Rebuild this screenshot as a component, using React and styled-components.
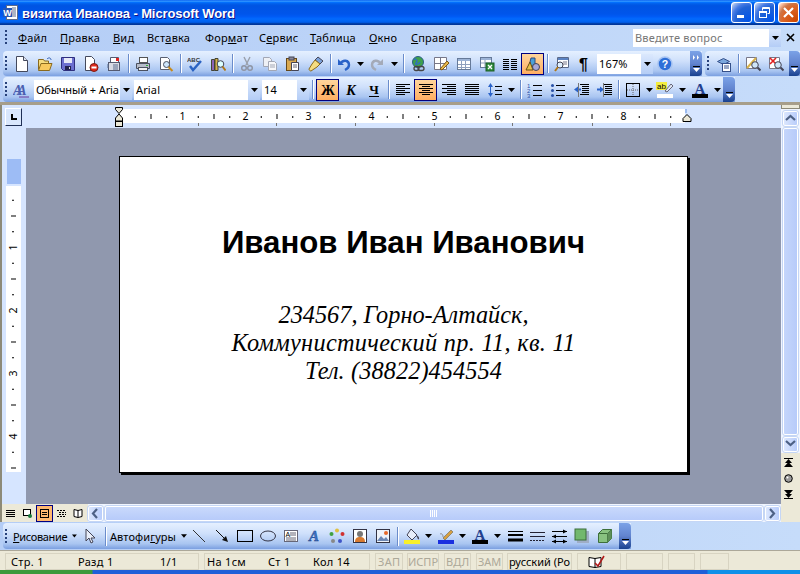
import React from 'react';
import styled, { createGlobalStyle } from 'styled-components';

const Global = createGlobalStyle`
  html, body { margin: 0; padding: 0; background: #c3daf9; overflow: hidden; }
  * { box-sizing: border-box; }
`;

const UI = `"Noto Sans", "DejaVu Sans", sans-serif`;

const Win = styled.div`
  width: 800px; height: 574px; display: flex; flex-direction: column; overflow: hidden;
  font-family: ${UI}; font-size: 11px; color: #000; background: #c3daf9;
`;
const TitleBar = styled.div`
  height: 25px; flex: none; display: flex; align-items: center; padding: 0 1px 0 3px;
  background: linear-gradient(#0058ee 0%, #3593ff 4%, #288eff 6%, #127dff 8%, #036ffc 10%, #0262ee 14%, #0057e5 20%, #0054e3 24%, #0055eb 56%, #005bf5 66%, #026afe 76%, #0062ef 86%, #0052d6 92%, #0040ab 94%, #003092 100%);
`;
const TitleText = styled.div`
  flex: 1; margin-left: 3px; padding-top: 2px; color: #fff; font: bold 13px "Liberation Sans", sans-serif;
  letter-spacing: -0.1px; text-shadow: 1px 1px #0f1089; white-space: nowrap;
`;
const WinBtn = styled.div`
  width: 21px; height: 21px; margin-left: ${p => p.$ml || 0}px; border: 1px solid #fff; border-radius: 3px;
  display: flex; align-items: center; justify-content: center;
  background: ${p => p.$close
    ? 'radial-gradient(circle at 90% 90%, #cc4600 0%, #dc6527 55%, #cd7546 70%, #ffccb2 90%, #fff 100%)'
    : 'radial-gradient(circle at 90% 90%, #0054e9 0%, #2263d5 55%, #4479e4 70%, #a3bbec 90%, #fff 100%)'};
`;
const Dock = styled.div`
  flex: none; display: flex; flex-direction: column;
  background: linear-gradient(90deg, #b4cdf6, #c6dcfa);
`;
const MenuBar = styled.div`
  height: 26px; display: flex; align-items: center; padding-left: 5px; padding-bottom: 1px;
`;
const Grip = styled.div`
  width: 5px; height: ${p => p.$h || 15}px; margin-right: ${p => p.$mr ?? 2}px; flex: none;
  background: radial-gradient(circle at 1px 1px, #27417a 1px, transparent 1.1px) 0 0 / 4px 4px repeat-y;
`;
const MenuItem = styled.span`
  width: ${p => p.$w}px; flex: none; white-space: nowrap; font-size: 11px; letter-spacing: 0.2px;
  u { text-underline-offset: 1px; }
`;
const AskBox = styled.div`
  width: 148px; height: 18px; margin-left: auto; background: #fff; display: flex; align-items: center;
  padding-left: 2px; color: #777; letter-spacing: .2px;
  span { flex: 1; }
`;
const Row = styled.div`
  height: ${p => p.$h || 26}px; display: flex; align-items: flex-start; padding-left: 3px;
`;
const Bar = styled.div`
  height: ${p => p.$h || 25}px; width: ${p => p.$w}px; margin-left: ${p => p.$ml || 0}px; flex: none;
  display: flex; align-items: center; padding-left: 2px; border-radius: 4px 0 0 4px; overflow: hidden;
  background: linear-gradient(#e5f0ff 0%, #cfe0fb 40%, #a9c5f1 80%, #7b9fe0 100%);
`;
const Slot = styled.div`
  width: ${p => p.$w || 23}px; height: 22px; flex: none; display: flex; align-items: center; justify-content: center;
  ${p => p.$on ? 'background:#ffb870; border:1px solid #000080; background: linear-gradient(#ffd59c,#ffae62);' : ''}
  font-size: 11px;
`;
const Sep = styled.div`
  width: ${p => p.$w || 6}px; height: 19px; flex: none; display: flex; justify-content: center;
  &::before { content: ''; width: 1px; background: #6a8ccb; box-shadow: 1px 0 #fff; }
`;
const Combo = styled.div`
  width: ${p => p.$w}px; height: 20px; margin-left: ${p => p.$ml || 0}px; flex: none; background: #fff;
  display: flex; align-items: center; padding-left: 2px; overflow: hidden; white-space: nowrap;
  span { flex: 1; overflow: hidden; letter-spacing: ${p => p.$ls ?? 0.15}px; }
`;
const ComboBtn = styled.div`
  width: 12px; height: 100%; flex: none; display: flex; align-items: center; justify-content: center;
  background: linear-gradient(#dbe8fd, #b4cdf6);
`;
const Chevron = styled.div`
  width: ${p => p.$w || 12}px; height: 100%; flex: none; margin-left: auto; border-radius: 0 4px 4px 0;
  display: flex; flex-direction: column; align-items: center; justify-content: flex-end; padding-bottom: 4px;
  background: linear-gradient(#7ba2e7, #6284cf 50%, #19418f);
`;
const Main = styled.div`
  height: 420px; flex: none; display: flex; border-top: 3px solid #a79e8a;
`;
const Center = styled.div`
  flex: 1; display: flex; flex-direction: column; min-width: 0;
`;
const RulerRow = styled.div`
  height: 23px; flex: none; display: flex; background: #d6e5ff; border-left: 2px solid #8d8a78;
`;
const TabBtnWrap = styled.div`
  width: 24px; flex: none; display: flex; align-items: center; padding-left: 3px;
`;
const TabBtn = styled.div`
  width: 17px; height: 18px; border: 1px solid; border-color: #fff #1f2f55 #1f2f55 #fff;
  background: #d9e7fd; display: flex; align-items: center; justify-content: center;
`;
const WorkRow = styled.div`
  flex: 1; display: flex; min-height: 0;
`;
const VRuler = styled.div`
  width: 26px; flex: none; background: #d6e5ff; border-left: 2px solid #8d8a78;
`;
const Doc = styled.div`
  flex: 1; background: #9098ae; padding: 28px 0 0 93px;
`;
const Card = styled.div`
  width: 569px; height: 317px; background: #fff; border: 1px solid #000; box-shadow: 2px 2px #000;
  display: flex; flex-direction: column; align-items: center; padding-top: 68px;
`;
const Name = styled.div`
  font: bold 31.2px/36px "Liberation Sans", sans-serif; color: #000; white-space: nowrap; margin-bottom: 40px;
`;
const AddrLine = styled.div`
  font: italic 24.3px/28px "Liberation Serif", serif; color: #000; white-space: nowrap;
  letter-spacing: ${p => p.$ls || 0}px;
`;
const VScroll = styled.div`
  width: 19px; flex: none; display: flex; flex-direction: column; background: #f0f5ff;
`;
const Split = styled.div`
  height: 4px; flex: none; background: #ece9d8; border: 1px solid #8d8a78; border-top: 0; margin-bottom: 2px;
`;
const ScrollBtn = styled.div`
  width: 15px; height: 15px; flex: none; margin-left: ${p => p.$ml ?? 2}px; margin-right: ${p => p.$mr ?? 0}px;
  margin-bottom: ${p => p.$mb ?? 0}px;
  border: 1px solid #fff; border-radius: 2px; outline: 1px solid #c5d6f5;
  display: flex; align-items: center; justify-content: center;
  background: linear-gradient(90deg, #dbe6fd, #b9cdfb);
`;
const VThumb = styled.div`
  flex: 1; margin: 2px; width: 15px; border: 1px solid #fff; border-radius: 2px; outline: 1px solid #c5d6f5;
  background: linear-gradient(90deg, #c5d6fb, #b7cbfa);
`;
const Browse = styled.div`
  height: 69px; flex: none; background: #ece9d8; display: flex; flex-direction: column; align-items: center;
  gap: 7px; padding: 5px 4px 0 0;
`;
const HRow = styled.div`
  height: 18px; flex: none; display: flex; align-items: center; background: #f0f5ff; border-left: 2px solid #8d8a78;
`;
const Views = styled.div`
  width: 86px; height: 18px; flex: none; background: #ece9d8; display: flex; align-items: center;
`;
const ViewBtn = styled.div`
  width: 17px; height: 17px; flex: none; display: flex; align-items: center; justify-content: center;
  ${p => p.$on ? 'background:#ffb870; border:1px solid #000080;' : ''}
`;
const HThumb = styled.div`
  flex: 1; height: 15px; margin: 0 2px; border: 1px solid #fff; border-radius: 2px; outline: 1px solid #c5d6f5;
  display: flex; align-items: center; justify-content: center;
  background: linear-gradient(#c9d9fc, #b7cbfa);
`;
const DrawDock = styled.div`
  height: 28px; flex: none; padding: 1px 0 0 3px; display: flex;
  background: linear-gradient(90deg, #b4cdf6, #c6dcfa);
`;
const DrawText = styled.span`
  width: ${p => p.$w}px; flex: none; display: flex; align-items: center; gap: 5px; white-space: nowrap;
  letter-spacing: ${p => p.$ls ?? 0.1}px; padding-left: ${p => p.$pl || 0}px;
`;
const Status = styled.div`
  height: 20px; flex: none; background: #ece9d8; border-top: 1px solid #aca899; display: flex; align-items: flex-start;
  padding: 2px 0 0 5px;
`;
const Panel = styled.div`
  width: ${p => p.$w}px; height: 17px; margin-right: ${p => p.$mr ?? 5}px; flex: none; border: 1px solid #d8d4c2;
  display: flex; align-items: center; white-space: nowrap; letter-spacing: ${p => p.$ls ?? 0.3}px; padding-left: ${p => p.$pl ?? 2}px;
  color: ${p => p.$dim ? '#aca899' : '#000'}; overflow: hidden;
`;
const Cell = styled.span`
  width: ${p => p.$w}px; flex: none;
`;
const Task = styled.div`
  flex: 1; background: linear-gradient(90deg, #3c9a3c 0, #3c9a3c 92px, #1f5fd8 93px, #1f5fd8 707px, #1090e8 708px);
`;

/* ---------- drawings ---------- */
const S = ({ w = 16, h = 16, children }) => (
  <svg width={w} height={h} viewBox={`0 0 ${w} ${h}`} fill="none">{children}</svg>
);
const Down = () => <S w={7} h={4}><path d="M0 0h7L3.5 4z" fill="#000" /></S>;
const Ln = ({ d, c = '#000', sw = 1 }) => <path d={d} stroke={c} strokeWidth={sw} />;

const icons = {
  new: <S><path d="M2.5 .5h7l4 4v11h-11z" fill="#fff" stroke="#44495c" /><path d="M9.5 .5v4h4" fill="#dfe4f0" stroke="#44495c" /></S>,
  open: <S><path d="M1.5 13.5v-10h5l1 1.5h4v2" fill="#f5dc80" stroke="#8a6a1d" /><path d="M1.5 14.5l2.5-7h11l-2.5 7z" fill="#f7c95e" stroke="#8a6a1d" /><path d="M10 3c2-2 4-1 4 1" stroke="#2c5bb0" /></S>,
  save: <S><path d="M1.5 1.5h13v13h-11l-2-2z" fill="#6c6fd0" stroke="#2f2f7e" /><rect x="4" y="2" width="8" height="5" fill="#e7e9f8" /><rect x="5" y="10" width="6" height="4" fill="#23234f" /><rect x="9" y="11" width="1" height="2" fill="#ddd" /></S>,
  perm: <S><path d="M2.5 .5h6l3 3v11h-9z" fill="#fff" stroke="#44495c" /><circle cx="11" cy="11.5" r="4" fill="#e12a1c" stroke="#7d1b12" /><rect x="8.5" y="10.5" width="5" height="2" fill="#fff" /></S>,
  mail: <S><rect x="2.5" y="6.5" width="11" height="8" fill="#d9dbe4" stroke="#555a70" /><path d="M4.5 6V1.5h8V6" fill="#fff" stroke="#555a70" /><path d="M1 9h2M1 11h2M7 9h5M7 11h5M7 13h5" stroke="#5b6c8f" /><rect x="10" y="2" width="3" height="3" fill="#d22" /></S>,
  print: <S><rect x="4.5" y="1.5" width="8" height="5" fill="#fff" stroke="#555" /><path d="M1.5 7.5h13v5h-13z" fill="#b7bcc9" stroke="#4b5160" /><rect x="3.5" y="11.5" width="9" height="3" fill="#f2f2f2" stroke="#4b5160" /><rect x="11" y="9" width="2" height="1" fill="#35b035" /></S>,
  preview: <S><path d="M2.5 1.5h7l2 2v10h-9z" fill="#fff" stroke="#5a6070" /><circle cx="8.5" cy="8.5" r="3" fill="#cfe6fa" stroke="#4b5160" /><path d="M10.5 11l4 4" stroke="#c78a1a" strokeWidth="2" /></S>,
  spell: <S><text x="0" y="6" fontFamily="Liberation Sans" fontSize="6" fontWeight="700" fill="#333">ABC</text><path d="M3 10l3 4 8-9" stroke="#2b63c3" strokeWidth="2.4" /></S>,
  research: <S><path d="M1.5 3.5h3v11h-3z" fill="#8a63b8" stroke="#443" /><path d="M5 2.5h3v12H5z" fill="#d8b24a" stroke="#443" /><circle cx="10.5" cy="8" r="3.3" fill="#dff" stroke="#445" /><path d="M12.5 10.5l3 4" stroke="#b0781a" strokeWidth="2" /></S>,
  cut: <S><path d="M5 1l4 8M11 1L7 9" stroke="#9aa0ab" strokeWidth="1.4" /><circle cx="5" cy="12" r="2.3" stroke="#8e94a3" strokeWidth="1.4" /><circle cx="11" cy="12" r="2.3" stroke="#8e94a3" strokeWidth="1.4" /></S>,
  copy: <S><path d="M1.5 1.5h6l2 2v7h-8z" fill="#eef0f5" stroke="#a2a7b5" /><path d="M6.5 5.5h6l2 2v7h-8z" fill="#f6f7fa" stroke="#a2a7b5" /><path d="M8 9h5M8 11h5" stroke="#a2a7b5" /></S>,
  paste: <S><rect x="1.5" y="2.5" width="10" height="12" fill="#d9a951" stroke="#65481a" /><rect x="4" y="1" width="5" height="3" fill="#889" stroke="#445" /><path d="M6.5 6.5h7v8h-7z" fill="#fff" stroke="#445" /><path d="M8 9h4M8 11h4" stroke="#667" /></S>,
  brush: <S><path d="M10 1l5 4-3 3-5-4z" fill="#7ba0d8" stroke="#445" /><path d="M7 4l5 4-3 3-6 4c-1 0-2-1-2-2l3-5z" fill="#f5dc80" stroke="#8a6a1d" /></S>,
  undo: <S><path d="M2 3v6h6" fill="#2a62c8" /><path d="M4 8c3-5 9-4 9 1 0 2-2 4-4 5" stroke="#2a62c8" strokeWidth="2.4" /></S>,
  redo: <S><path d="M14 3v6H8" fill="#a4aab8" /><path d="M12 8C9 3 3 4 3 9c0 2 2 4 4 5" stroke="#a4aab8" strokeWidth="2.4" /></S>,
  link: <S><circle cx="8" cy="6" r="5.5" fill="#3fa14b" stroke="#2b5d88" /><path d="M4 3c3 0 4 2 2 4s3 2 4-1" stroke="#2f6fc0" strokeWidth="1.5" /><rect x="4" y="10.5" width="5" height="4" rx="2" stroke="#444" strokeWidth="1.3" /><rect x="8" y="10.5" width="6" height="4" rx="2" stroke="#444" strokeWidth="1.3" /></S>,
  tables: <S><path d="M1.5 1.5h12v12h-12z" fill="#fff" stroke="#778" /><path d="M7.5 2v11M2 7.5h11" stroke="#778" /><path d="M7 13l7-8 2 2-7 7z" fill="#e9b94c" stroke="#7c5715" /></S>,
  table: <S><rect x="1.5" y="2.5" width="13" height="11" fill="#fff" stroke="#667a99" /><rect x="2" y="3" width="12" height="2" fill="#9cb3d6" /><path d="M2 8.5h12M2 11.5h12M5.5 5v8M9.5 5v8" stroke="#8fa0bd" /></S>,
  excel: <S><rect x="1.5" y="1.5" width="11" height="10" fill="#fff" stroke="#667a99" /><rect x="2" y="2" width="10" height="2" fill="#9cb3d6" /><path d="M2 7h10M6 4v7" stroke="#8fa0bd" /><rect x="7" y="7" width="8" height="8" fill="#2e8b3d" stroke="#1a5d25" /><path d="M9 9l4 4M13 9l-4 4" stroke="#fff" strokeWidth="1.3" /></S>,
  cols: <S><Ln d="M1 3.5h6M1 5.5h6M1 7.5h6M1 9.5h6M1 11.5h6M1 13.5h6M9 3.5h6M9 5.5h6M9 7.5h6M9 9.5h6M9 11.5h6M9 13.5h6" /></S>,
  drawing: <S><path d="M6 2l4 0 0 8H4z" fill="#4aa0d8" stroke="#304a80" /><path d="M1 14l4-8 3 8z" fill="#e9c04a" stroke="#6a5010" /><circle cx="11" cy="11" r="3.5" fill="#a7a7d8" stroke="#445" /></S>,
  docmap: <S><path d="M3.5 1.5h11v10h-11z" fill="#fff" stroke="#5a6a8a" /><rect x="4" y="2" width="10" height="2" fill="#5c83c2" /><path d="M9 6h4M9 8h4" stroke="#778" /><circle cx="6" cy="9" r="3" fill="#dff0ff" stroke="#445" /><path d="M4 11l-3 4" stroke="#b0781a" strokeWidth="2" /></S>,
  pil: <S><text x="2" y="14" fontFamily="Liberation Sans" fontSize="16" fontWeight="700" fill="#000">¶</text></S>,
  help: <S w={18} h={18}><circle cx="9" cy="9" r="7" fill="#2e6fd8" stroke="#a8c4f2" strokeWidth="1.6" /><text x="5.8" y="13" fontFamily="Liberation Sans" fontSize="10.5" fontWeight="700" fill="#fff">?</text></S>,
  web2: <S><path d="M1.5 5.5l6-3 6 3-6 3z" fill="#7ba7dc" stroke="#35508a" /><rect x="6.5" y="7.5" width="8" height="8" fill="#fff" stroke="#35508a" /><path d="M8 10h5M8 12h5" stroke="#35508a" /></S>,
  mag1: <S><path d="M1.5 1.5h10v11h-10z" fill="#fff" stroke="#778" /><path d="M2 12l9-10" stroke="#d8b24a" strokeWidth="2" /><circle cx="10" cy="9" r="3.3" fill="#cfe6fa" stroke="#445" /><path d="M12.5 11.5l3 3" stroke="#445" strokeWidth="2" /></S>,
  mag2: <S><path d="M1.5 1.5h10v11h-10z" fill="#fff" stroke="#778" /><path d="M2 2l6 6M8 2L2 8" stroke="#e01f1f" strokeWidth="1.6" /><circle cx="10" cy="9" r="3.3" fill="#cfe6fa" stroke="#445" /><path d="M12.5 11.5l3 3" stroke="#445" strokeWidth="2" /></S>,
  style: <S w={18}><text x="0" y="13" letterSpacing="-5" fontFamily="Liberation Serif" fontStyle="italic" fontWeight="700" fontSize="14" fill="#4a5fb0">AA</text><path d="M6 15h10" stroke="#6b3a9e" /></S>,
  bold: <S><text x="8" y="13" textAnchor="middle" fontFamily="Liberation Serif" fontWeight="700" fontSize="14" fill="#000">Ж</text></S>,
  ital: <S><text x="8" y="13" textAnchor="middle" fontFamily="Liberation Serif" fontWeight="700" fontStyle="italic" fontSize="14" fill="#000">К</text></S>,
  under: <S><text x="8" y="12" textAnchor="middle" fontFamily="Liberation Serif" fontWeight="700" fontSize="13" fill="#000">Ч</text><path d="M3 14.5h10" stroke="#000" /></S>,
  left: <S><Ln d="M1 2.5h14M1 4.5h9M1 6.5h14M1 8.5h9M1 10.5h14M1 12.5h9" /></S>,
  center: <S><Ln d="M1 2.5h14M4 4.5h8M1 6.5h14M4 8.5h8M1 10.5h14M4 12.5h8" /></S>,
  right: <S><Ln d="M1 2.5h14M6 4.5h9M1 6.5h14M6 8.5h9M1 10.5h14M6 12.5h9" /></S>,
  just: <S><Ln d="M1 2.5h14M1 4.5h14M1 6.5h14M1 8.5h14M1 10.5h14M1 12.5h14" /></S>,
  spacing: <S><path d="M3.5 1L1 5h5zM3.5 15L1 11h5z" fill="#2a62c8" /><Ln d="M3.5 5v6" c="#2a62c8" /><Ln d="M8 4.5h7M8 8.5h7M8 12.5h7" /></S>,
  num: <S><text x="0" y="6" fontFamily="Liberation Sans" fontSize="6" fill="#2a52a8">1</text><text x="0" y="11" fontFamily="Liberation Sans" fontSize="6" fill="#2a52a8">2</text><text x="0" y="16" fontFamily="Liberation Sans" fontSize="6" fill="#2a52a8">3</text><Ln d="M6 3.5h9M6 8.5h9M6 13.5h9" /></S>,
  bull: <S><circle cx="2.5" cy="3.5" r="1.5" fill="#2a52a8" /><circle cx="2.5" cy="8.5" r="1.5" fill="#2a52a8" /><circle cx="2.5" cy="13.5" r="1.5" fill="#2a52a8" /><Ln d="M6 3.5h9M6 8.5h9M6 13.5h9" /></S>,
  out: <S><Ln d="M7 2.5h9M9 4.5h7M9 6.5h7M9 8.5h7M9 10.5h7M7 12.5h9" /><path d="M1 7.5l4-3v2h3v2H5v2z" fill="#2a62c8" /><Ln d="M5.5 1v14" c="#777" /></S>,
  ind: <S><Ln d="M7 2.5h9M9 4.5h7M9 6.5h7M9 8.5h7M9 10.5h7M7 12.5h9" /><path d="M8 7.5l-4-3v2H1v2h3v2z" fill="#2a62c8" /><Ln d="M7.5 1v14" c="#777" /></S>,
  borders: <S><rect x="1.5" y="1.5" width="13" height="13" stroke="#000" /><path d="M8 2v12M2 8h12" stroke="#666" strokeDasharray="1 1" /></S>,
  hi: <S w={18}><rect x="0" y="0" width="11" height="8" fill="#f4ee42" /><text x="1" y="7" fontFamily="Liberation Sans" fontSize="8" fill="#000">ab</text><path d="M9 9l6-7 2 2-6 6z" fill="#dfe6f5" stroke="#667" /><rect x="1" y="12" width="16" height="4" fill="#fff" /></S>,
  fc: <S w={18}><text x="9" y="12" textAnchor="middle" fontFamily="Liberation Serif" fontWeight="700" fontSize="15" fill="#23408e">A</text><rect x="1" y="12" width="16" height="4" fill="#000" /></S>,
  line: <S><path d="M2 2l12 12" stroke="#333" /></S>,
  arr: <S><path d="M2 2l9 9" stroke="#111" /><path d="M14 14l-6-2 4-4z" fill="#111" /></S>,
  rect: <S><rect x="0.5" y="2.5" width="15" height="11" stroke="#000" /></S>,
  oval: <S><ellipse cx="8" cy="8" rx="7.5" ry="5" stroke="#334" /></S>,
  tbox: <S><rect x="1.5" y="2.5" width="13" height="11" fill="#fff" stroke="#667" /><text x="2.5" y="9" fontFamily="Liberation Sans" fontSize="7" fill="#000">A</text><path d="M7 5h6M7 7h6M3 10h10M3 12h10" stroke="#667" /></S>,
  word: <S><text x="8" y="13" textAnchor="middle" fontFamily="Liberation Serif" fontStyle="italic" fontWeight="700" fontSize="15" fill="#3a74c8" stroke="#1f3e80" strokeWidth=".4">A</text></S>,
  diag: <S><circle cx="8" cy="2.5" r="2" fill="#e0c040" /><circle cx="13.5" cy="6" r="2" fill="#d03030" /><circle cx="11" cy="13" r="2" fill="#3f55c8" /><circle cx="4" cy="13" r="2" fill="#888" /><circle cx="2.5" cy="6" r="2" fill="#40a040" /></S>,
  clip: <S><rect x="1.5" y="1.5" width="13" height="13" fill="#fff" stroke="#334" /><circle cx="8" cy="6" r="3" fill="#777" /><path d="M3 14c0-4 2-5 5-5s5 1 5 5z" fill="#d87a30" /></S>,
  image: <S><rect x="1.5" y="1.5" width="13" height="13" fill="#eef3fa" stroke="#334" /><path d="M2 13l4-5 3 3 2-2 3 4z" fill="#6c87b4" /><circle cx="11" cy="5" r="2" fill="#e76a2a" /></S>,
  fill: <S><path d="M7 1l6 6-5 5-5-5z" fill="#e8eefa" stroke="#445" /><path d="M13 8c1 1 2 2 1 3" stroke="#445" strokeWidth="1.5" /><rect x="0" y="12" width="16" height="4" fill="#f8f02a" /></S>,
  pen: <S><path d="M5 10l8-8 2 2-8 8z" fill="#d8a040" stroke="#554" strokeWidth=".5" /><path d="M2 6c2-1 3 1 3 3" stroke="#888" /><rect x="0" y="12" width="16" height="4" fill="#1a2fe0" /></S>,
  lstyle: <S><Ln d="M0 3.5h15" sw={1} /><Ln d="M0 7h15" sw={2} /><Ln d="M0 12h15" sw={3} /></S>,
  dash: <S><Ln d="M0 4.5h15" c="#223" /><Ln d="M0 8.5h15" c="#223" /><path d="M0 12.5h15" stroke="#223" strokeDasharray="2 1" /></S>,
  arrows: <S><Ln d="M0 3.5h15M0 8.5h15M0 13.5h15" /><path d="M15 3.5l-4-2v4zM0 8.5l4-2v4zM0 13.5l4-2v4zM15 13.5l-4-2v4z" fill="#000" /></S>,
  shad: <S><rect x="3" y="3" width="12" height="12" fill="#9fadc6" /><rect x="1" y="1" width="11" height="11" fill="#72b86e" stroke="#3d6f3a" /></S>,
  d3: <S><path d="M1.5 5.5l4-4h9v9l-4 4h-9z" fill="#88c280" stroke="#3d6f3a" /><path d="M1.5 5.5h9v9M10.5 5.5l4-4" stroke="#3d6f3a" /><path d="M10.5 5.5l4-4v9l-4 4z" fill="#5d8f58" /></S>,
};

const Ic = ({ n }) => icons[n];
const Btn = ({ n, on, w }) => <Slot $on={on} $w={w}><Ic n={n} /></Slot>;
const Arrow = ({ w = 12 }) => <Slot $w={w}><Down /></Slot>;
const More = ({ w, two }) => (
  <Chevron $w={w}>
    {two && <svg width="7" height="5" viewBox="0 0 7 5" style={{ marginBottom: 6 }}><path d="M0 0l2 2.5L0 5zM4 0l2 2.5L4 5z" fill="#fff" /></svg>}
    <svg width="7" height="6" viewBox="0 0 7 6"><path d="M0 0h7v1H0z" fill="#000" /><path d="M0 2h7L3.5 6z" fill="#fff" /></svg>
  </Chevron>
);

const HRuler = () => {
  const origin = 93.5, step = 15.75, items = [];
  for (let i = 1; i < 36; i++) {
    const x = origin + i * step;
    if (x > 659) break;
    if (i % 4 === 0) items.push(<text key={i} x={x} y="15" textAnchor="middle" fontFamily="Noto Sans" fontSize="10.5" fill="#000">{i / 4}</text>);
    else if (i % 2 === 0) items.push(<rect key={i} x={x - .5} y="9" width="1" height="5" fill="#000" />);
    else items.push(<rect key={i} x={x - .5} y="11" width="1" height="2" fill="#000" />);
  }
  const tabs = [172, 250, 329, 408, 486, 566, 644];
  return (
    <svg width="755" height="23" viewBox="0 0 755 23" style={{ display: 'block' }}>
      <rect x="94" y="4" width="565" height="14" fill="#fff" />
      <rect x="659" y="4" width="2" height="4" fill="#9dbcf0" />
      {items}
      {tabs.map(t => <rect key={t} x={t} y="18" width="1" height="3" fill="#777" />)}
      <path d="M89.5 2.5h7v2l-3.5 4-3.5-4zM93 9l3.5 4v3h-7v-3z" fill="#ece9d8" stroke="#000" />
      <rect x="89.5" y="16.5" width="7" height="5" fill="#ece9d8" stroke="#000" />
      <path d="M661 9.5l4 4v3h-8v-3z" fill="#ece9d8" stroke="#000" />
    </svg>
  );
};

const VRulerDraw = () => {
  const origin = 56.5, step = 15.75, items = [];
  for (let i = 1; i < 20; i++) {
    const y = origin + i * step;
    if (y > 343) break;
    if (i % 4 === 0) items.push(<text key={i} x="0" y="0" transform={`translate(15 ${y}) rotate(-90)`} textAnchor="middle" fontFamily="Noto Sans" fontSize="10.5" fill="#000">{i / 4}</text>);
    else if (i % 2 === 0) items.push(<rect key={i} x="9" y={y - .5} width="5" height="1" fill="#000" />);
    else items.push(<rect key={i} x="10" y={y - .5} width="2" height="1" fill="#000" />);
  }
  return (
    <svg width="22" height="376" viewBox="0 0 22 376" style={{ display: 'block' }}>
      <rect x="5" y="31" width="14" height="25" fill="#9dbcf5" />
      <rect x="4" y="58" width="15" height="286" fill="#fff" />
      {items}
    </svg>
  );
};

const Chev = ({ d }) => {
  const p = { up: 'M1 7l4.5-4L10 7', down: 'M1 2l4.5 4L10 2', left: 'M7 1L3 5.5 7 10', right: 'M3 1l4 4.5L3 10' }[d];
  return <svg width="11" height="11" viewBox="0 0 11 11"><path d={p} fill="none" stroke="#4d6185" strokeWidth="2.2" /></svg>;
};

const Menu = ({ w, pre, u, post }) => <MenuItem $w={w}>{pre}<u>{u}</u>{post}</MenuItem>;

export default function App() {
  return (
    <Win>
      <Global />
      <TitleBar>
        <svg width="16" height="16" viewBox="0 0 16 16">
          <rect x="3.5" y="0.5" width="11" height="14" fill="#fff" stroke="#5a6a8a" />
          <path d="M9 3h4M9 5h4M9 7h4M9 9h4M9 11h4" stroke="#5a6a8a" />
          <rect x="0" y="3" width="9" height="9" fill="#2458b8" />
          <text x="4.5" y="10.5" textAnchor="middle" fontFamily="Liberation Sans" fontWeight="700" fontSize="9" fill="#fff">W</text>
        </svg>
        <TitleText>визитка Иванова - Microsoft Word</TitleText>
        <WinBtn>
          <svg width="13" height="13" viewBox="0 0 13 13"><rect x="2" y="9" width="7" height="3" fill="#fff" /></svg>
        </WinBtn>
        <WinBtn $ml={2}>
          <svg width="13" height="13" viewBox="0 0 13 13" fill="none" stroke="#fff"><rect x="1.5" y="5.5" width="7" height="6" /><path d="M1.5 6.5h7" /><path d="M4.5 4.5v-3h7v6h-2M4.5 2.5h7" /></svg>
        </WinBtn>
        <WinBtn $ml={3} $close>
          <svg width="13" height="13" viewBox="0 0 13 13"><path d="M2 2l9 9M11 2l-9 9" stroke="#fff" strokeWidth="2.2" /></svg>
        </WinBtn>
      </TitleBar>

      <Dock>
        <MenuBar>
          <Grip $mr={8} />
          <Menu w={42} pre="" u="Ф" post="айл" />
          <Menu w={53} pre="" u="П" post="равка" />
          <Menu w={34} pre="" u="В" post="ид" />
          <Menu w={58} pre="Вст" u="а" post="вка" />
          <Menu w={54} pre="Фор" u="м" post="ат" />
          <Menu w={51} pre="С" u="е" post="рвис" />
          <Menu w={59} pre="" u="Т" post="аблица" />
          <Menu w={42} pre="" u="О" post="кно" />
          <Menu w={50} pre="" u="С" post="правка" />
          <AskBox>
            <span>Введите вопрос</span>
            <ComboBtn><Down /></ComboBtn>
          </AskBox>
          <Slot $w={19}>
            <svg width="9" height="9" viewBox="0 0 9 9"><path d="M1 1l7 7M8 1L1 8" stroke="#000" strokeWidth="1.6" /></svg>
          </Slot>
        </MenuBar>

        <Row>
          <Bar $w={699}>
            <Grip $mr={0} />
            <Btn n="new" /><Btn n="open" /><Btn n="save" /><Btn n="perm" /><Btn n="mail" /><Sep />
            <Btn n="print" /><Btn n="preview" /><Sep />
            <Btn n="spell" /><Btn n="research" /><Sep />
            <Btn n="cut" /><Btn n="copy" /><Btn n="paste" /><Btn n="brush" /><Sep />
            <Btn n="undo" w={21} /><Arrow /><Btn n="redo" w={22} /><Arrow /><Sep />
            <Btn n="link" /><Btn n="tables" /><Btn n="table" /><Btn n="excel" /><Btn n="cols" /><Btn n="drawing" on /><Sep />
            <Btn n="docmap" /><Btn n="pil" />
            <Combo $w={56} $ml={1}><span>167%</span><ComboBtn><Down /></ComboBtn></Combo>
            <Btn n="help" />
            <More two />
          </Bar>
          <Bar $w={95} $ml={3}>
            <Grip $mr={0} />
            <Btn n="web2" /><Sep />
            <Btn n="mag1" /><Btn n="mag2" />
            <More w={11} />
          </Bar>
        </Row>

        <Row $h={25}>
          <Bar $w={732}>
            <Grip $mr={0} />
            <Btn n="style" />
            <Combo $w={98} $ml={1} $ls={-0.1}><span>Обычный + Aria</span><ComboBtn><Down /></ComboBtn></Combo>
            <Combo $w={126} $ml={2}><span>Arial</span><ComboBtn><Down /></ComboBtn></Combo>
            <Combo $w={47} $ml={2}><span>14</span><ComboBtn><Down /></ComboBtn></Combo>
            <Sep $w={7} />
            <Btn n="bold" on /><Btn n="ital" /><Btn n="under" /><Sep />
            <Btn n="left" /><Btn n="center" on /><Btn n="right" /><Btn n="just" />
            <Btn n="spacing" /><Arrow w={11} /><Sep />
            <Btn n="num" /><Btn n="bull" /><Btn n="out" /><Btn n="ind" /><Sep />
            <Btn n="borders" /><Arrow w={10} /><Btn n="hi" w={22} /><Arrow /><Btn n="fc" w={24} /><Arrow w={10} />
            <More />
          </Bar>
        </Row>
      </Dock>

      <Main>
        <Center>
          <RulerRow>
            <TabBtnWrap>
              <TabBtn>
                <svg width="8" height="8" viewBox="0 0 8 8"><path d="M1 1v6h6V5H3V1z" fill="#000" /></svg>
              </TabBtn>
            </TabBtnWrap>
            <HRuler />
          </RulerRow>
          <WorkRow>
            <VRuler><VRulerDraw /></VRuler>
            <Doc>
              <Card>
                <Name>Иванов Иван Иванович</Name>
                <AddrLine>234567, Горно-Алтайск,</AddrLine>
                <AddrLine $ls={0.29}>Коммунистический пр. 11, кв. 11</AddrLine>
                <AddrLine $ls={0.1}>Тел. (38822)454554</AddrLine>
              </Card>
            </Doc>
          </WorkRow>
          <HRow>
            <Views>
              <ViewBtn><svg width="11" height="11" viewBox="0 0 11 11" fill="none"><path d="M1 2.5h9M1 4.5h9M1 6.5h9M1 8.5h9" stroke="#000" /></svg></ViewBtn>
              <ViewBtn><svg width="11" height="11" viewBox="0 0 11 11"><rect x="1.5" y="1.5" width="7" height="6" fill="#fff" stroke="#000" /><circle cx="8" cy="8" r="2" fill="#187a3a" /></svg></ViewBtn>
              <ViewBtn $on><svg width="11" height="11" viewBox="0 0 11 11" fill="none"><rect x="1.5" y="1.5" width="8" height="8" stroke="#000" /><path d="M3 4.5h5M3 6.5h5" stroke="#000" /></svg></ViewBtn>
              <ViewBtn><svg width="11" height="11" viewBox="0 0 11 11" fill="none"><path d="M1 2.5h9M3 4.5h7M3 6.5h7M1 8.5h9" stroke="#000" strokeDasharray="2 1" /></svg></ViewBtn>
              <ViewBtn><svg width="11" height="11" viewBox="0 0 11 11"><path d="M1 1.5l4 1 4-1v7l-4 1-4-1zM5 2.5v7" fill="#fff" stroke="#000" /></svg></ViewBtn>
            </Views>
            <ScrollBtn $ml={0}><Chev d="left" /></ScrollBtn>
            <HThumb>
              <svg width="8" height="7" viewBox="0 0 8 7"><path d="M.5 0v7M2.5 0v7M4.5 0v7M6.5 0v7" stroke="#fff" /></svg>
            </HThumb>
            <ScrollBtn $ml={0} $mr={1}><Chev d="right" /></ScrollBtn>
          </HRow>
        </Center>
        <VScroll>
          <Split />
          <ScrollBtn><Chev d="up" /></ScrollBtn>
          <VThumb />
          <ScrollBtn $mb={1}><Chev d="down" /></ScrollBtn>
          <Browse>
            <svg width="9" height="9" viewBox="0 0 9 9"><path d="M0 0h9v1H0zM4.5 1L8 5H1zM4.5 4L9 9H0z" fill="#000" /></svg>
            <svg width="9" height="9" viewBox="0 0 9 9"><circle cx="4.5" cy="4.5" r="3.8" fill="#9a9a9a" stroke="#000" /><circle cx="3.5" cy="3.5" r="1" fill="#fff" /></svg>
            <svg width="9" height="9" viewBox="0 0 9 9"><path d="M0 9h9V8H0zM4.5 8L8 4H1zM4.5 5L9 0H0z" fill="#000" /></svg>
          </Browse>
        </VScroll>
      </Main>

      <DrawDock>
        <Bar $w={628} $h={26}>
          <Grip $mr={3} />
          <DrawText $w={64} $ls={-0.35}><span><u>Р</u>исование</span><Down /></DrawText>
          <Slot $w={25}><svg width="16" height="16" viewBox="0 0 16 16"><path d="M4 1v12l3-3 2 5 2-1-2-4h4z" fill="#e8eefa" stroke="#445" /></svg></Slot>
          <Sep />
          <DrawText $w={79} $pl={2}><span>Автофи<u>г</u>уры</span><Down /></DrawText>
          <Btn n="line" /><Btn n="arr" /><Btn n="rect" /><Btn n="oval" /><Btn n="tbox" /><Btn n="word" /><Btn n="diag" /><Btn n="clip" /><Btn n="image" /><Sep />
          <Btn n="fill" /><Arrow w={11} /><Btn n="pen" /><Arrow w={11} /><Btn n="fc" /><Arrow w={13} />
          <Btn n="lstyle" /><Btn n="dash" w={22} /><Btn n="arrows" w={22} /><Btn n="shad" w={22} /><Btn n="d3" w={24} />
          <More />
        </Bar>
      </DrawDock>

      <Status>
        <Panel $w={194} $pl={5}><Cell $w={67}>Стр. 1</Cell><Cell $w={82}>Разд 1</Cell><Cell $w={30}>1/1</Cell></Panel>
        <Panel $w={166}><Cell $w={61}>На 1см</Cell><Cell $w={45}>Ст 1</Cell><Cell $w={50}>Кол 14</Cell></Panel>
        <Panel $w={28} $dim $mr={4} $pl={2}>ЗАП</Panel>
        <Panel $w={32} $dim $pl={0} $ls={0}>ИСПР</Panel>
        <Panel $w={27} $dim $pl={1} $ls={0}>ВДЛ</Panel>
        <Panel $w={27} $dim $mr={4} $pl={1} $ls={0}>ЗАМ</Panel>
        <Panel $w={65} $pl={1} $ls={0}>русский (Ро</Panel>
        <Panel $w={44} $pl={10}>
          <svg width="18" height="16" viewBox="0 0 18 16"><path d="M1 3.5l6 1 6-1v9l-6 1-6-1zM7 4.5v9" fill="#fff" stroke="#000" /><path d="M7 9l3 3 6-10" stroke="#b01818" strokeWidth="1.6" fill="none" /></svg>
        </Panel>
        <Panel $w={37} />
        <Panel $w={27} />
        <Panel $w={29} />
      </Status>
      <Task />
    </Win>
  );
}
